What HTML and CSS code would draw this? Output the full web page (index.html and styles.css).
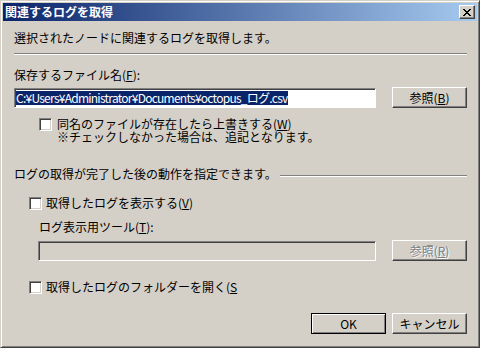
FILE: index.html
```html
<!DOCTYPE html>
<html lang="ja">
<head>
<meta charset="utf-8">
<title>関連するログを取得</title>
<link rel="stylesheet" href="styles.css">
</head>
<body>
<div class="window">
  <div class="titlebar">
    <span class="title">関連するログを取得</span>
    <button class="close" type="button" aria-label="閉じる">
      <svg width="8" height="7" viewBox="0 0 8 7" shape-rendering="crispEdges"><path fill="#000" d="M0 0h2v1H0zM6 0h2v1H6zM1 1h2v1H1zM5 1h2v1H5zM2 2h4v1H2zM3 3h2v1H3zM2 4h4v1H2zM1 5h2v1H1zM5 5h2v1H5zM0 6h2v1H0zM6 6h2v1H6z"/></svg>
    </button>
  </div>
  <div class="content">
    <p class="intro">選択されたノードに関連するログを取得します。</p>
    <div class="sep sep-top"></div>
    <div class="label label-file">保存するファイル名(<u>F</u>):</div>
    <div class="field-row">
      <div class="field"><span class="sel">C:¥Users¥Administrator¥Documents¥octopus_ログ.csv</span></div>
      <button class="btn" type="button">参照(<u>B</u>)</button>
    </div>
    <div class="check-row check-row-1">
      <span class="checkbox"></span>
      <div class="check-text two-line">
        <div class="line">同名のファイルが存在したら上書きする(<u>W</u>)</div>
        <div class="line">※チェックしなかった場合は、追記となります。</div>
      </div>
    </div>
    <div class="group-row">
      <span class="group-label">ログの取得が完了した後の動作を指定できます。</span>
      <div class="sep sep-group"></div>
    </div>
    <div class="check-row check-row-2">
      <span class="checkbox"></span>
      <div class="check-text">取得したログを表示する(<u>V</u>)</div>
    </div>
    <div class="label label-tool">ログ表示用ツール(<u>T</u>):</div>
    <div class="field-row field-row-2">
      <div class="field field-disabled"></div>
      <button class="btn btn-disabled" type="button" disabled>参照(<u>R</u>)</button>
    </div>
    <div class="check-row check-row-3">
      <span class="checkbox"></span>
      <div class="check-text">取得したログのフォルダーを開く(<u>S</u></div>
    </div>
    <div class="actions">
      <button class="btn btn-default" type="button">OK</button>
      <button class="btn" type="button">キャンセル</button>
    </div>
  </div>
</div>
</body>
</html>
```
FILE: styles.css
```css
html, body {
  margin: 0;
  padding: 0;
  background: #d4d0c8;
}

body {
  font-family: "Noto Sans CJK JP", "Noto Sans", sans-serif;
  font-size: 12px;
  color: #000;
}

.window {
  width: 480px;
  height: 348px;
  box-sizing: border-box;
  background: #d4d0c8;
  border: 1px solid;
  border-color: #d4d0c8 #404040 #404040 #d4d0c8;
  box-shadow: inset 1px 1px #fff, inset -1px -1px #808080;
  padding: 2px;
  display: flex;
  flex-direction: column;
}

.titlebar {
  height: 18px;
  flex: none;
  display: flex;
  align-items: center;
  justify-content: space-between;
  background: linear-gradient(to right, #0a246a, #a6caf0);
  padding: 0 2px 0 2px;
}

.title {
  color: #fff;
  font-weight: bold;
  font-size: 12px;
  line-height: 14px;
}

.close {
  width: 16px;
  height: 14px;
  padding: 0;
  margin: 0;
  box-sizing: border-box;
  background: #d4d0c8;
  border: 1px solid;
  border-color: #fff #404040 #404040 #fff;
  box-shadow: inset -1px -1px #808080;
  display: flex;
  align-items: center;
  justify-content: center;
}

.close svg {
  display: block;
}

.content {
  padding: 0 10px 0 11px;
  display: flex;
  flex-direction: column;
}

p {
  margin: 0;
}

u {
  text-decoration: underline;
  text-underline-offset: 1px;
}

.intro {
  margin-top: 10px;
  line-height: 14px;
  white-space: nowrap;
}

.sep {
  height: 0;
  border-top: 1px solid #808080;
  border-bottom: 1px solid #fff;
}

.sep-top {
  margin-top: 8px;
}

.label {
  line-height: 14px;
  white-space: nowrap;
}

.label-file {
  margin-top: 13px;
}

.label-tool {
  margin-top: 10px;
  padding-left: 25px;
}

.field-row {
  display: flex;
  align-items: flex-start;
  margin-top: 5px;
}

.field-row-2 {
  margin-top: 6px;
  padding-left: 24px;
}

.field {
  width: 362px;
  height: 20px;
  box-sizing: border-box;
  margin-top: 1px;
  background: #fff;
  border: 1px solid;
  border-color: #808080 #fff #fff #808080;
  box-shadow: inset 1px 1px #404040;
  padding: 2px 0 0 1px;
  overflow: hidden;
  white-space: nowrap;
}

.field-disabled {
  width: 338px;
  background: #d4d0c8;
}

.sel {
  display: inline-block;
  height: 14px;
  line-height: 14px;
  background: #0a246a;
  color: #fff;
  letter-spacing: -0.75px;
  vertical-align: top;
}

.btn {
  width: 75px;
  height: 21px;
  box-sizing: border-box;
  margin: 0;
  padding: 0;
  font-family: inherit;
  font-size: 12px;
  line-height: 14px;
  color: #000;
  background: #d4d0c8;
  border: 1px solid;
  border-color: #fff #404040 #404040 #fff;
  box-shadow: inset -1px -1px #808080;
  white-space: nowrap;
}

.field-row .btn {
  margin-left: auto;
}

.btn-disabled {
  color: #808080;
  text-shadow: 1px 1px #fff;
}

.btn-default {
  border-color: #000;
  box-shadow: inset 1px 1px #fff, inset -1px -1px #808080;
}

.check-row {
  display: flex;
  align-items: flex-start;
}

.checkbox {
  flex: none;
  width: 13px;
  height: 13px;
  box-sizing: border-box;
  background: #fff;
  border: 1px solid;
  border-color: #808080 #fff #fff #808080;
  box-shadow: inset 1px 1px #404040, inset -1px -1px #d4d0c8;
  margin-top: 1px;
}

.check-text {
  margin-left: 4px;
  line-height: 14px;
  white-space: nowrap;
}

.two-line {
  margin-left: 5px;
  display: flex;
  flex-direction: column;
}

.two-line .line {
  height: 13px;
  line-height: 13px;
}

.check-row-1 {
  margin-top: 9px;
  padding-left: 25px;
}

.check-row-2 {
  margin-top: 15px;
  padding-left: 15px;
}

.check-row-3 {
  margin-top: 19px;
  padding-left: 15px;
}

.group-row {
  display: flex;
  align-items: flex-start;
  margin-top: 24px;
  line-height: 14px;
}

.group-label {
  white-space: nowrap;
}

.sep-group {
  flex: 1;
  margin-left: 3px;
  margin-top: 8px;
}

.actions {
  display: flex;
  justify-content: flex-end;
  gap: 6px;
  margin-top: 19px;
}
```
